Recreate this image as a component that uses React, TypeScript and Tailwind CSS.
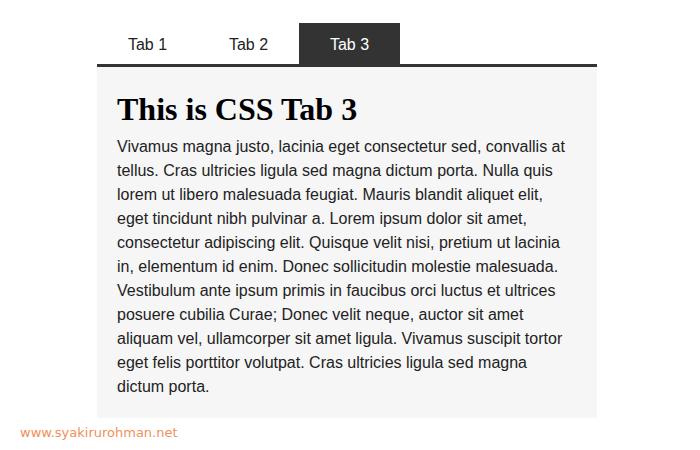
export default function App() {
  const tabs = ['Tab 1', 'Tab 2', 'Tab 3']
  return (
    <div className="relative h-[450px] w-[700px] bg-white">
      <div className="ml-[97px] w-[500px] pt-[23px]">
        <div className="flex border-b-[3px] border-[#333333]">
          {tabs.map((t, i) => (
            <div
              key={t}
              className={
                i === 2
                  ? 'flex h-[41px] w-[101px] items-center justify-center bg-[#333333] pt-[2px] font-["Liberation_Sans",Arial,sans-serif] text-[16px] text-white'
                  : 'flex h-[41px] w-[101px] items-center justify-center pt-[2px] font-["Liberation_Sans",Arial,sans-serif] text-[16px] text-[#222222]'
              }
            >
              {t}
            </div>
          ))}
        </div>
        <section className="h-[351px] bg-[#f6f6f6] px-[20px] pt-[24px]">
          <h1 className='font-["Liberation_Serif","Times_New_Roman",serif] text-[32px] leading-[36px] font-bold text-black'>
            This is CSS Tab 3
          </h1>
          <p className='mt-[8px] font-["Liberation_Sans",Arial,sans-serif] text-[16px] leading-[24px] text-[#222222]'>
            Vivamus magna justo, lacinia eget consectetur sed, convallis at tellus. Cras ultricies ligula sed magna
            dictum porta. Nulla quis lorem ut libero malesuada feugiat. Mauris blandit aliquet elit, eget tincidunt nibh
            pulvinar a. Lorem ipsum dolor sit amet, consectetur adipiscing elit. Quisque velit nisi, pretium ut lacinia
            in, elementum id enim. Donec sollicitudin molestie malesuada. Vestibulum ante ipsum primis in faucibus orci
            luctus et ultrices posuere cubilia Curae; Donec velit neque, auctor sit amet aliquam vel, ullamcorper sit
            amet ligula. Vivamus suscipit tortor eget felis porttitor volutpat. Cras ultricies ligula sed magna dictum
            porta.
          </p>
        </section>
      </div>
      <div className='absolute left-[20px] top-[423px] font-["DejaVu_Sans",sans-serif] text-[13px] text-[#f0905a]'>
        www.syakirurohman.net
      </div>
    </div>
  )
}
